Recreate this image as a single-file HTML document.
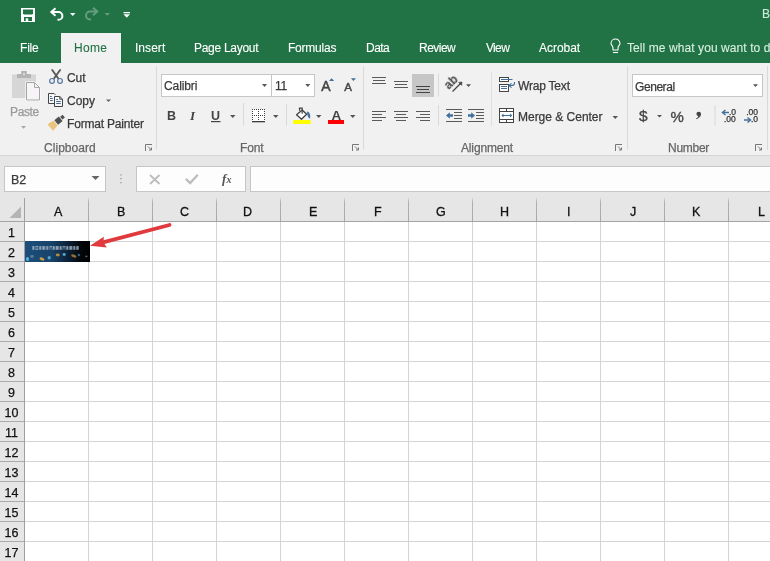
<!DOCTYPE html>
<html><head><meta charset="utf-8">
<style>
*{margin:0;padding:0;box-sizing:border-box}
html,body{width:770px;height:561px;overflow:hidden;background:#fff;font-family:"Liberation Sans",sans-serif;-webkit-font-smoothing:antialiased}
.tx,.rh,svg text{will-change:transform}
.a{position:absolute;white-space:nowrap}
.tx{line-height:14px;-webkit-text-stroke:0.25px currentColor}
#title{position:absolute;left:0;top:0;width:770px;height:63px;background:#217346}
#home{position:absolute;left:61px;top:33px;width:60px;height:31px;background:#f1f1f1}
#ribbon{position:absolute;left:0;top:63px;width:770px;height:92px;background:#f1f1f1}
#rline{position:absolute;left:0;top:155px;width:770px;height:1px;background:#d5d5d5}
#fbar{position:absolute;left:0;top:156px;width:770px;height:43px;background:#e6e6e6}
.sep{position:absolute;width:1px;background:#d9d9d9}
.box{position:absolute;background:#fff;border:1px solid #c6c6c6}
#hdr{position:absolute;left:0;top:199px;width:770px;height:22px;background:#e6e6e6}
#rhbg{position:absolute;left:0;top:221px;width:24px;height:340px;background:#e6e6e6}
.vl{position:absolute;width:1px;background:#d4d4d4}
.hl{position:absolute;height:1px;background:#d4d4d4}
.rh{position:absolute;left:0;width:23px;font-size:12.5px;color:#111;-webkit-text-stroke:0.25px currentColor;text-align:center;line-height:20px}
#ov{position:absolute;left:0;top:0;z-index:5}
</style></head><body>
<div id="title"></div>
<div id="home"></div>
<div id="ribbon"></div>
<div id="rline"></div>
<div id="fbar"></div>
<div class="sep" style="left:156px;top:66px;height:84px"></div>
<div class="sep" style="left:363px;top:66px;height:84px"></div>
<div class="sep" style="left:627px;top:66px;height:84px"></div>
<div class="sep" style="left:767px;top:66px;height:84px"></div>
<div class="box" style="left:161px;top:74px;width:111px;height:23px"></div>
<div class="box" style="left:271px;top:74px;width:44px;height:23px"></div>
<div class="box" style="left:632px;top:74px;width:131px;height:23px"></div>
<div class="box" style="left:4px;top:166px;width:102px;height:26px;background:#fdfdfd"></div>
<div class="box" style="left:136px;top:166px;width:110px;height:26px;background:#fdfdfd"></div>
<div class="box" style="left:250px;top:166px;width:530px;height:26px;background:#fdfdfd"></div>
<div id="hdr"></div>
<div id="rhbg"></div>
<div class="vl" style="left:24px;top:198px;height:363px;background:#a0a0a0"></div>
<div class="vl" style="left:88px;top:197px;height:24px;background:linear-gradient(#e6e6e6,#b0b0b0 5px,#a8a8a8)"></div>
<div class="vl" style="left:88px;top:222px;height:339px"></div>
<div class="vl" style="left:152px;top:197px;height:24px;background:linear-gradient(#e6e6e6,#b0b0b0 5px,#a8a8a8)"></div>
<div class="vl" style="left:152px;top:222px;height:339px"></div>
<div class="vl" style="left:216px;top:197px;height:24px;background:linear-gradient(#e6e6e6,#b0b0b0 5px,#a8a8a8)"></div>
<div class="vl" style="left:216px;top:222px;height:339px"></div>
<div class="vl" style="left:280px;top:197px;height:24px;background:linear-gradient(#e6e6e6,#b0b0b0 5px,#a8a8a8)"></div>
<div class="vl" style="left:280px;top:222px;height:339px"></div>
<div class="vl" style="left:344px;top:197px;height:24px;background:linear-gradient(#e6e6e6,#b0b0b0 5px,#a8a8a8)"></div>
<div class="vl" style="left:344px;top:222px;height:339px"></div>
<div class="vl" style="left:408px;top:197px;height:24px;background:linear-gradient(#e6e6e6,#b0b0b0 5px,#a8a8a8)"></div>
<div class="vl" style="left:408px;top:222px;height:339px"></div>
<div class="vl" style="left:472px;top:197px;height:24px;background:linear-gradient(#e6e6e6,#b0b0b0 5px,#a8a8a8)"></div>
<div class="vl" style="left:472px;top:222px;height:339px"></div>
<div class="vl" style="left:536px;top:197px;height:24px;background:linear-gradient(#e6e6e6,#b0b0b0 5px,#a8a8a8)"></div>
<div class="vl" style="left:536px;top:222px;height:339px"></div>
<div class="vl" style="left:600px;top:197px;height:24px;background:linear-gradient(#e6e6e6,#b0b0b0 5px,#a8a8a8)"></div>
<div class="vl" style="left:600px;top:222px;height:339px"></div>
<div class="vl" style="left:664px;top:197px;height:24px;background:linear-gradient(#e6e6e6,#b0b0b0 5px,#a8a8a8)"></div>
<div class="vl" style="left:664px;top:222px;height:339px"></div>
<div class="vl" style="left:728px;top:197px;height:24px;background:linear-gradient(#e6e6e6,#b0b0b0 5px,#a8a8a8)"></div>
<div class="vl" style="left:728px;top:222px;height:339px"></div>
<div class="vl" style="left:792px;top:197px;height:24px;background:linear-gradient(#e6e6e6,#b0b0b0 5px,#a8a8a8)"></div>
<div class="vl" style="left:792px;top:222px;height:339px"></div>
<div class="hl" style="left:0;top:221px;width:770px;background:#a4a4a4"></div>
<div class="hl" style="left:0;top:241px;width:24px;background:#acacac"></div>
<div class="hl" style="left:25px;top:241px;width:745px"></div>
<div class="hl" style="left:0;top:261px;width:24px;background:#acacac"></div>
<div class="hl" style="left:25px;top:261px;width:745px"></div>
<div class="hl" style="left:0;top:281px;width:24px;background:#acacac"></div>
<div class="hl" style="left:25px;top:281px;width:745px"></div>
<div class="hl" style="left:0;top:301px;width:24px;background:#acacac"></div>
<div class="hl" style="left:25px;top:301px;width:745px"></div>
<div class="hl" style="left:0;top:321px;width:24px;background:#acacac"></div>
<div class="hl" style="left:25px;top:321px;width:745px"></div>
<div class="hl" style="left:0;top:341px;width:24px;background:#acacac"></div>
<div class="hl" style="left:25px;top:341px;width:745px"></div>
<div class="hl" style="left:0;top:361px;width:24px;background:#acacac"></div>
<div class="hl" style="left:25px;top:361px;width:745px"></div>
<div class="hl" style="left:0;top:381px;width:24px;background:#acacac"></div>
<div class="hl" style="left:25px;top:381px;width:745px"></div>
<div class="hl" style="left:0;top:401px;width:24px;background:#acacac"></div>
<div class="hl" style="left:25px;top:401px;width:745px"></div>
<div class="hl" style="left:0;top:421px;width:24px;background:#acacac"></div>
<div class="hl" style="left:25px;top:421px;width:745px"></div>
<div class="hl" style="left:0;top:441px;width:24px;background:#acacac"></div>
<div class="hl" style="left:25px;top:441px;width:745px"></div>
<div class="hl" style="left:0;top:461px;width:24px;background:#acacac"></div>
<div class="hl" style="left:25px;top:461px;width:745px"></div>
<div class="hl" style="left:0;top:481px;width:24px;background:#acacac"></div>
<div class="hl" style="left:25px;top:481px;width:745px"></div>
<div class="hl" style="left:0;top:501px;width:24px;background:#acacac"></div>
<div class="hl" style="left:25px;top:501px;width:745px"></div>
<div class="hl" style="left:0;top:521px;width:24px;background:#acacac"></div>
<div class="hl" style="left:25px;top:521px;width:745px"></div>
<div class="hl" style="left:0;top:541px;width:24px;background:#acacac"></div>
<div class="hl" style="left:25px;top:541px;width:745px"></div>
<div class="hl" style="left:0;top:561px;width:24px;background:#acacac"></div>
<div class="hl" style="left:25px;top:561px;width:745px"></div>
<div class="rh" style="top:223px">1</div>
<div class="rh" style="top:243px">2</div>
<div class="rh" style="top:263px">3</div>
<div class="rh" style="top:283px">4</div>
<div class="rh" style="top:303px">5</div>
<div class="rh" style="top:323px">6</div>
<div class="rh" style="top:343px">7</div>
<div class="rh" style="top:363px">8</div>
<div class="rh" style="top:383px">9</div>
<div class="rh" style="top:403px">10</div>
<div class="rh" style="top:423px">11</div>
<div class="rh" style="top:443px">12</div>
<div class="rh" style="top:463px">13</div>
<div class="rh" style="top:483px">14</div>
<div class="rh" style="top:503px">15</div>
<div class="rh" style="top:523px">16</div>
<div class="rh" style="top:543px">17</div>
<div id="t_file" class="a tx" style="left:19.60px;top:41.00px;font-size:12px;color:#fff;letter-spacing:-0.200px;-webkit-text-stroke:0.1px currentColor">File</div>
<div id="t_home" class="a tx" style="left:74.00px;top:41.00px;font-size:12px;color:#217346;letter-spacing:0.333px;-webkit-text-stroke:0.1px currentColor">Home</div>
<div id="t_insert" class="a tx" style="left:134.80px;top:41.00px;font-size:12px;color:#fff;letter-spacing:0.040px;-webkit-text-stroke:0.1px currentColor">Insert</div>
<div id="t_page" class="a tx" style="left:194.00px;top:41.00px;font-size:12px;color:#fff;letter-spacing:-0.280px;-webkit-text-stroke:0.1px currentColor">Page Layout</div>
<div id="t_form" class="a tx" style="left:288.20px;top:41.00px;font-size:12px;color:#fff;letter-spacing:-0.229px;-webkit-text-stroke:0.1px currentColor">Formulas</div>
<div id="t_data" class="a tx" style="left:365.60px;top:41.00px;font-size:12px;color:#fff;letter-spacing:-0.534px;-webkit-text-stroke:0.1px currentColor">Data</div>
<div id="t_review" class="a tx" style="left:418.80px;top:41.00px;font-size:12px;color:#fff;letter-spacing:-0.520px;-webkit-text-stroke:0.1px currentColor">Review</div>
<div id="t_view" class="a tx" style="left:485.60px;top:41.00px;font-size:12px;color:#fff;letter-spacing:-0.667px;-webkit-text-stroke:0.1px currentColor">View</div>
<div id="t_acro" class="a tx" style="left:539.40px;top:41.00px;font-size:12px;color:#fff;letter-spacing:-0.034px;-webkit-text-stroke:0.1px currentColor">Acrobat</div>
<div id="t_tell" class="a tx" style="left:627.20px;top:41.00px;font-size:12px;color:#d8efdf;letter-spacing:0.080px;-webkit-text-stroke:0.1px currentColor">Tell me what you want to do</div>
<div id="t_b" class="a tx" style="left:761.50px;top:6.70px;font-size:12px;color:#cdebd6;-webkit-text-stroke:0.1px currentColor">B</div>
<div id="t_paste" class="a tx" style="left:9.50px;top:105.00px;font-size:12px;color:#9a9a9a;letter-spacing:-0.376px;">Paste</div>
<div id="t_cut" class="a tx" style="left:66.80px;top:71.40px;font-size:12px;color:#3a3a3a;letter-spacing:-0.100px;">Cut</div>
<div id="t_copy" class="a tx" style="left:67.00px;top:94.40px;font-size:12px;color:#3a3a3a;">Copy</div>
<div id="t_fp" class="a tx" style="left:67.20px;top:117.40px;font-size:12px;color:#3a3a3a;letter-spacing:-0.184px;">Format Painter</div>
<div id="t_clip" class="a tx" style="left:43.60px;top:141.00px;font-size:12px;color:#666;letter-spacing:0.050px;">Clipboard</div>
<div id="t_font" class="a tx" style="left:240.20px;top:140.80px;font-size:12px;color:#666;letter-spacing:-0.134px;">Font</div>
<div id="t_align" class="a tx" style="left:461.40px;top:141.00px;font-size:12px;color:#666;letter-spacing:-0.150px;">Alignment</div>
<div id="t_num" class="a tx" style="left:668.00px;top:141.00px;font-size:12px;color:#666;letter-spacing:-0.280px;">Number</div>
<div id="t_calibri" class="a tx" style="left:163.60px;top:78.80px;font-size:12px;color:#3a3a3a;letter-spacing:-0.100px;">Calibri</div>
<div id="t_11" class="a tx" style="left:275.00px;top:79.00px;font-size:12px;color:#3a3a3a;letter-spacing:-0.300px;">11</div>
<div id="t_wrap" class="a tx" style="left:518.00px;top:79.40px;font-size:12px;color:#3a3a3a;letter-spacing:-0.200px;">Wrap Text</div>
<div id="t_merge" class="a tx" style="left:518.00px;top:110.20px;font-size:12px;color:#3a3a3a;letter-spacing:-0.015px;">Merge &amp; Center</div>
<div id="t_general" class="a tx" style="left:635.40px;top:80.00px;font-size:12px;color:#3a3a3a;letter-spacing:-0.433px;">General</div>
<div id="t_b2" class="a tx" style="left:11.40px;top:173.00px;font-size:12.5px;color:#3a3a3a;">B2</div>
<div id="t_cA" class="a tx" style="left:53.80px;top:205.00px;font-size:12.5px;color:#111;-webkit-text-stroke:0.3px currentColor">A</div>
<div id="t_cB" class="a tx" style="left:117.10px;top:205.00px;font-size:12.5px;color:#111;-webkit-text-stroke:0.3px currentColor">B</div>
<div id="t_cC" class="a tx" style="left:180.00px;top:205.00px;font-size:12.5px;color:#111;-webkit-text-stroke:0.3px currentColor">C</div>
<div id="t_cD" class="a tx" style="left:243.20px;top:205.00px;font-size:12.5px;color:#111;-webkit-text-stroke:0.3px currentColor">D</div>
<div id="t_cE" class="a tx" style="left:309.10px;top:205.00px;font-size:12.5px;color:#111;-webkit-text-stroke:0.3px currentColor">E</div>
<div id="t_cF" class="a tx" style="left:373.60px;top:205.00px;font-size:12.5px;color:#111;-webkit-text-stroke:0.3px currentColor">F</div>
<div id="t_cG" class="a tx" style="left:435.80px;top:205.00px;font-size:12.5px;color:#111;-webkit-text-stroke:0.3px currentColor">G</div>
<div id="t_cH" class="a tx" style="left:500.40px;top:205.00px;font-size:12.5px;color:#111;-webkit-text-stroke:0.3px currentColor">H</div>
<div id="t_cI" class="a tx" style="left:566.50px;top:205.00px;font-size:12.5px;color:#111;-webkit-text-stroke:0.3px currentColor">I</div>
<div id="t_cJ" class="a tx" style="left:629.90px;top:205.00px;font-size:12.5px;color:#111;-webkit-text-stroke:0.3px currentColor">J</div>
<div id="t_cK" class="a tx" style="left:692.20px;top:205.00px;font-size:12.5px;color:#111;-webkit-text-stroke:0.3px currentColor">K</div>
<div id="t_cL" class="a tx" style="left:757.50px;top:205.00px;font-size:12.5px;color:#111;-webkit-text-stroke:0.3px currentColor">L</div>
<svg id="ov" width="770" height="561" viewBox="0 0 770 561">
<!-- QAT -->
<rect x="21" y="8" width="14" height="14" fill="#fff"/>
<path d="M23,9.5 H33 V13.5 L32,14.5 H24 L23,13.5 Z" fill="#217346"/>
<rect x="24" y="17" width="8" height="4" fill="#217346"/>
<rect x="25.7" y="18.3" width="2.5" height="2.7" fill="#fff"/>
<path d="M51,12 H58.5 A3.9,3.9 0 0 1 58.5,19.8 H57.5" fill="none" stroke="#fff" stroke-width="2"/>
<path d="M55.5,8.3 L51.3,12 L55.5,15.7" fill="none" stroke="#fff" stroke-width="2"/>
<path d="M70,13 H75.5 L72.75,16 Z" fill="#fff"/>
<g opacity="0.3">
<path d="M97.5,11.5 H90 A4,4 0 0 0 90,19.5 H91" fill="none" stroke="#fff" stroke-width="2"/>
<path d="M93,7.8 L97.2,11.5 L93,15.2" fill="none" stroke="#fff" stroke-width="2"/>
<path d="M104.5,13 H110 L107.25,15.8 Z" fill="#fff"/>
</g>
<rect x="123.5" y="12" width="6.5" height="1.3" fill="#fff"/>
<path d="M123.5,14.2 H130 L126.75,17.8 Z" fill="#fff"/>
<!-- lightbulb -->
<path d="M613,50 V48 C613,46 611,45 611,43.5 A4.5,4.5 0 0 1 620,43.5 C620,45 618,46 618,48 V50 Z" fill="none" stroke="#fff" stroke-width="1.1"/>
<path d="M613,52.5 H618" stroke="#fff" stroke-width="1.1"/>

<!-- Paste -->
<rect x="12" y="74.5" width="24" height="23.5" fill="#d6d6d6"/>
<rect x="17" y="74" width="14" height="4" fill="#b4b4b4"/>
<rect x="21.2" y="71" width="5.6" height="3.5" fill="#b4b4b4"/>
<circle cx="24" cy="74.2" r="1" fill="#e6e6e6"/>
<path d="M25.5,81.5 H35 L40.5,87 V101 H25.5 Z" fill="#fff" />
<path d="M26.5,82.5 H34.5 L39.5,87.5 V100 H26.5 Z" fill="#f6f4f6" stroke="#a6a6a6" stroke-width="1"/>
<path d="M34.5,82.5 V87.5 H39.5" fill="none" stroke="#a6a6a6" stroke-width="1"/>
<path d="M21,126 H26 L23.5,128.8 Z" fill="#a6a6a6"/>

<!-- Cut -->
<path d="M52.2,70 L58.3,78.6 M60.1,70 L54,78.6" stroke="#555" stroke-width="1.8" fill="none" stroke-linecap="round"/>
<circle cx="52" cy="80.9" r="2.4" fill="#e3eefa" stroke="#60789a" stroke-width="1.2"/>
<circle cx="60" cy="80.9" r="2.4" fill="#e3eefa" stroke="#60789a" stroke-width="1.2"/>

<!-- Copy -->
<path d="M48.5,93.5 H54 L55.5,95 M48.5,93.5 V103.5 H54" fill="none" stroke="#444" stroke-width="1"/>
<rect x="49.5" y="94.5" width="5" height="8.5" fill="#f3f8fc"/>
<path d="M50,96.5 H51.8 M50,98.5 H52.8 M50,100.5 H52.8" stroke="#4d6a88" stroke-width="1"/>
<path d="M54.5,96.5 H59.8 L62.5,99.2 V106.5 H54.5 Z" fill="#f3f8fc" stroke="#444" stroke-width="1"/>
<path d="M59.8,96.5 V99.2 H62.5" fill="none" stroke="#444" stroke-width="1"/>
<path d="M56.2,99.5 H58 M56.2,101.5 H60.8 M56.2,103.5 H60.8" stroke="#4d6a88" stroke-width="1"/>

<!-- Format painter -->
<g transform="translate(56 122.6) rotate(-40)">
<path d="M-7.5,-4.3 L-0.6,-3.2 V3.2 L-7.5,4.3 Z" fill="#ebc47c"/>
<rect x="0.3" y="-2.9" width="5.8" height="5.8" fill="#505050"/>
<rect x="6.9" y="-1.8" width="3.2" height="3.6" fill="#505050"/>
</g>
<!-- dropdown copy -->
<path d="M106,99.5 H111 L108.5,102 Z" fill="#666"/>
<!-- launchers -->
<g fill="none" stroke="#777" stroke-width="1">
<path d="M145.5,151 V144.5 H152"/>
<path d="M148,146.5 L151.5,150 M151.5,147.5 V150 H149"/>
<path d="M352.5,151 V144.5 H359"/>
<path d="M355,146.5 L358.5,150 M358.5,147.5 V150 H356"/>
<path d="M615.5,151 V144.5 H622"/>
<path d="M618,146.5 L621.5,150 M621.5,147.5 V150 H619"/>
<path d="M755.5,151 V144.5 H762"/>
<path d="M758,146.5 L761.5,150 M761.5,147.5 V150 H759"/>
</g>

<!-- Font dropdowns -->
<path d="M262,84 H267 L264.5,87 Z" fill="#555"/>
<path d="M305.3,84 H310.3 L307.8,87 Z" fill="#555"/>
<!-- grow/shrink -->
<text x="321.2" y="90.8" font-family="Liberation Sans" font-size="14" fill="#444" stroke="#444" stroke-width="0.5">A</text>
<path d="M329,81 L331.6,78.2 L334.2,81 Z" fill="#41719c"/>
<text x="344.2" y="90.8" font-family="Liberation Sans" font-size="11.5" fill="#444" stroke="#444" stroke-width="0.45">A</text>
<path d="M350.9,78.3 H356 L353.45,81 Z" fill="#41719c"/>
<!-- B I U -->
<text x="167" y="120.3" font-family="Liberation Sans" font-weight="bold" font-size="12.5" fill="#444">B</text>
<text x="190" y="120.3" font-family="Liberation Serif" font-style="italic" font-weight="bold" font-size="13" fill="#444">I</text>
<text x="211" y="119.5" font-family="Liberation Sans" font-weight="bold" font-size="12.5" fill="#444">U</text>
<rect x="211" y="121" width="9.5" height="1.2" fill="#444"/>
<path d="M230,115 H235.5 L232.75,118 Z" fill="#555"/>
<rect x="243" y="103" width="1" height="23" fill="#d9d9d9"/>
<!-- borders -->
<rect x="252" y="109" width="13" height="12" fill="#fff"/>
<g fill="#3c3c3c">
<rect x="252" y="109" width="1" height="1"/><rect x="254" y="109" width="1" height="1"/><rect x="256" y="109" width="1" height="1"/><rect x="258" y="109" width="1" height="1"/><rect x="260" y="109" width="1" height="1"/><rect x="262" y="109" width="1" height="1"/><rect x="264" y="109" width="1" height="1"/>
<rect x="252" y="115" width="1" height="1"/><rect x="254" y="115" width="1" height="1"/><rect x="256" y="115" width="1" height="1"/><rect x="258" y="115" width="1" height="1"/><rect x="260" y="115" width="1" height="1"/><rect x="262" y="115" width="1" height="1"/><rect x="264" y="115" width="1" height="1"/>
<rect x="252" y="111" width="1" height="1"/><rect x="252" y="113" width="1" height="1"/><rect x="252" y="117" width="1" height="1"/><rect x="252" y="119" width="1" height="1"/>
<rect x="258" y="111" width="1" height="1"/><rect x="258" y="113" width="1" height="1"/><rect x="258" y="117" width="1" height="1"/><rect x="258" y="119" width="1" height="1"/>
<rect x="264" y="111" width="1" height="1"/><rect x="264" y="113" width="1" height="1"/><rect x="264" y="117" width="1" height="1"/><rect x="264" y="119" width="1" height="1"/>
<rect x="252" y="121" width="13" height="1.3"/>
</g>
<path d="M273,115 H278.5 L275.75,118 Z" fill="#555"/>
<rect x="286" y="104" width="1" height="22" fill="#d9d9d9"/>
<!-- fill color -->
<path d="M302.2,110 L306.6,114.2 L301.5,119.2 L296.6,114.8 Z" fill="#fff" stroke="#444" stroke-width="1.4" stroke-linejoin="round"/>
<path d="M299.5,110.8 V108.2 H302.2 V113.8" fill="none" stroke="#444" stroke-width="1.2"/>
<path d="M306.8,111.6 C309.2,111.8 310.8,114 310,118.8 C309,118.5 307.8,117 307.5,115.5 Z" fill="#41719c"/>
<rect x="293.2" y="120" width="17.5" height="4" fill="#ffff00"/>
<path d="M316,115 H321.5 L318.75,118 Z" fill="#555"/>
<!-- font color -->
<text x="331.5" y="119.8" font-family="Liberation Sans" font-weight="bold" font-size="13.5" fill="#444">A</text>
<rect x="328" y="120" width="16" height="4" fill="#ff0000"/>
<path d="M350,115 H355.5 L352.75,118 Z" fill="#555"/>

<!-- Alignment -->
<g fill="#5a5a5a">
<rect x="372" y="77" width="14" height="1"/><rect x="373" y="80" width="12" height="1"/><rect x="372" y="83" width="14" height="1"/>
<rect x="394" y="81" width="14" height="1"/><rect x="395" y="84" width="12" height="1"/><rect x="394" y="87" width="14" height="1"/>
</g>
<rect x="412" y="74" width="22" height="23" fill="#c6c6c6"/>
<g fill="#444">
<rect x="416" y="86" width="14" height="1"/><rect x="417" y="89" width="12" height="1"/><rect x="416" y="92" width="14" height="1"/>
</g>
<rect x="438" y="73.5" width="1" height="23" fill="#d9d9d9"/>
<g fill="#5a5a5a">
<rect x="372" y="111" width="14" height="1"/><rect x="372" y="114" width="10" height="1"/><rect x="372" y="117" width="14" height="1"/><rect x="372" y="120" width="10" height="1"/>
<rect x="394" y="111" width="14" height="1"/><rect x="396" y="114" width="10" height="1"/><rect x="394" y="117" width="14" height="1"/><rect x="396" y="120" width="10" height="1"/>
<rect x="416" y="111" width="14" height="1"/><rect x="420" y="114" width="10" height="1"/><rect x="416" y="117" width="14" height="1"/><rect x="420" y="120" width="10" height="1"/>
</g>
<rect x="438" y="105" width="1" height="21" fill="#d9d9d9"/>
<!-- orientation -->
<text x="0" y="0" font-family="Liberation Sans" font-size="12" font-weight="bold" fill="#444" transform="translate(448.8,90) rotate(-45)">ab</text>
<path d="M452.5,91.5 L461,83" stroke="#444" stroke-width="1.3"/>
<path d="M458.6,82.4 L462,82 L461.6,85.4 Z" fill="#444" stroke="#444" stroke-width="0.6"/>
<path d="M466,84.2 H471 L468.5,87 Z" fill="#555"/>
<!-- indent -->
<g fill="#5a5a5a">
<rect x="446" y="109" width="16" height="1"/><rect x="454" y="112" width="8" height="1"/><rect x="454" y="115" width="8" height="1"/><rect x="454" y="118" width="8" height="1"/><rect x="446" y="121" width="16" height="1"/>
<rect x="468" y="109" width="16" height="1"/><rect x="476" y="112" width="8" height="1"/><rect x="476" y="115" width="8" height="1"/><rect x="476" y="118" width="8" height="1"/><rect x="468" y="121" width="16" height="1"/>
</g>
<path d="M446,115.5 L449.8,112.3 V114.3 H453 V116.7 H449.8 V118.7 Z" fill="#41719c"/>
<path d="M475,115.5 L471.2,112.3 V114.3 H468 V116.7 H471.2 V118.7 Z" fill="#41719c"/>
<rect x="491" y="72" width="1" height="54" fill="#dedede"/>
<!-- wrap text -->
<rect x="499.5" y="77.5" width="9" height="4" fill="#fff" stroke="#444" stroke-width="1"/>
<rect x="499.5" y="84.5" width="9" height="7" fill="#fff" stroke="#444" stroke-width="1"/>
<path d="M501,79.5 H512.5 M501,86.5 H507 M501,88.5 H507" stroke="#41719c" stroke-width="1"/>
<path d="M514.5,82 V83.5 C514.5,85 513,85.5 511,85.5 H509.5" fill="none" stroke="#41719c" stroke-width="1.1"/>
<path d="M511.5,83.3 L509,85.5 L511.5,87.7" fill="none" stroke="#41719c" stroke-width="1.1"/>
<!-- merge -->
<rect x="499.5" y="108.5" width="14" height="14" fill="#fff" stroke="#444" stroke-width="1"/>
<path d="M499.5,111.5 H513.5 M499.5,119.5 H513.5 M506.5,108.5 V111.5 M506.5,119.5 V122.5" stroke="#444" stroke-width="1"/>
<path d="M502,115.5 H511.5" stroke="#41719c" stroke-width="1.1"/>
<path d="M501.3,115.5 L503.5,113.5 V117.5 Z M512.3,115.5 L510,113.5 V117.5 Z" fill="#41719c"/>
<path d="M612.5,116 H618 L615.25,119 Z" fill="#555"/>

<!-- Number -->
<path d="M753,84.3 H758 L755.5,87 Z" fill="#555"/>
<text x="639" y="121" font-family="Liberation Sans" font-size="15.5" fill="#444" stroke="#444" stroke-width="0.3">$</text>
<path d="M657,115 H662 L659.5,117.5 Z" fill="#555"/>
<text x="670.6" y="122.3" font-family="Liberation Sans" font-size="15" fill="#444" stroke="#444" stroke-width="0.35">%</text>
<path d="M698.6,111.8 C700.4,111.8 701.2,113 701,114.5 C700.8,116.5 699,118.3 696.3,119.2 L696,118.4 C697.5,117.6 698.2,116.8 698.4,115.9 C697.2,115.8 696.5,115 696.5,113.9 C696.5,112.6 697.4,111.8 698.6,111.8 Z" fill="#444"/>
<rect x="714.5" y="105.5" width="1" height="20.5" fill="#d9d9d9"/>
<path d="M723,112.5 H729" stroke="#41719c" stroke-width="1.5"/><path d="M725.5,110 L722.5,112.5 L725.5,115" fill="none" stroke="#41719c" stroke-width="1.5"/>
<text x="729" y="115" font-family="Liberation Sans" font-size="8.5" fill="#333" stroke="#333" stroke-width="0.25">.0</text>
<text x="724" y="122" font-family="Liberation Sans" font-size="8.5" fill="#333" stroke="#333" stroke-width="0.25">.00</text>
<text x="746.2" y="115" font-family="Liberation Sans" font-size="8.5" fill="#333" stroke="#333" stroke-width="0.25">.00</text>
<path d="M744,120 H750" stroke="#41719c" stroke-width="1.5"/><path d="M747.5,117.5 L750.5,120 L747.5,122.5" fill="none" stroke="#41719c" stroke-width="1.5"/>
<text x="751" y="122" font-family="Liberation Sans" font-size="8.5" fill="#333" stroke="#333" stroke-width="0.25">.0</text>

<!-- formula bar -->
<path d="M91.5,176 H99.5 L95.5,180 Z" fill="#666"/>
<g fill="#999"><rect x="120.3" y="174.3" width="1.3" height="1.3"/><rect x="120.3" y="178" width="1.3" height="1.3"/><rect x="120.3" y="182" width="1.3" height="1.3"/></g>
<path d="M150,175 L159.5,184 M159.5,175 L150,184" stroke="#bdbdbd" stroke-width="1.8"/>
<path d="M185.8,178.8 L190.2,183 L197.8,174.8" fill="none" stroke="#bdbdbd" stroke-width="2.3"/>
<text x="222" y="182.5" font-family="Liberation Serif" font-style="italic" font-weight="bold" font-size="13" fill="#555">f</text>
<text x="226.5" y="183" font-family="Liberation Serif" font-style="italic" font-weight="bold" font-size="10" fill="#555">x</text>
<rect x="779" y="166" width="1" height="1" fill="none"/>

<!-- picture in A2 -->
<defs>
<linearGradient id="pg" x1="0" x2="1" y1="0" y2="0">
<stop offset="0" stop-color="#1d4f7c"/><stop offset="0.4" stop-color="#18436a"/><stop offset="0.62" stop-color="#0e2740"/><stop offset="0.85" stop-color="#03070c"/><stop offset="1" stop-color="#000"/>
</linearGradient>
<filter id="bl" x="-50%" y="-50%" width="200%" height="200%"><feGaussianBlur stdDeviation="0.6"/></filter>
</defs>
<rect x="25" y="241" width="65" height="21" fill="url(#pg)"/>
<g filter="url(#bl)">
<rect x="32" y="246.2" width="47" height="3.6" fill="#8fa6b8" opacity="0.35"/>
<g fill="#c8d6e2" opacity="0.55">
<rect x="32.5" y="246" width="1.6" height="3.8"/><rect x="35.5" y="246" width="2.5" height="1"/><rect x="35.5" y="248.8" width="2.5" height="1"/><rect x="39.5" y="246" width="1.4" height="3.8"/><rect x="42.5" y="246" width="2.2" height="3.8"/><rect x="46.5" y="246" width="1.4" height="3.8"/><rect x="49.5" y="246" width="2.4" height="1.2"/><rect x="53" y="246" width="1.6" height="3.8"/><rect x="56" y="246" width="2.5" height="3.8"/><rect x="60" y="246" width="1.4" height="3.8"/><rect x="63" y="246" width="2.2" height="1.2"/><rect x="66.5" y="246" width="1.5" height="3.8"/><rect x="69.5" y="246" width="2.4" height="3.8"/><rect x="73.5" y="246" width="1.4" height="3.8"/><rect x="76.5" y="246" width="2" height="3.8"/>
</g>
<ellipse cx="27.5" cy="259" rx="1.6" ry="1.9" fill="#5ec8f0" opacity="0.85"/>
<ellipse cx="32" cy="256.5" rx="1.8" ry="1.4" fill="#8c9aa0" opacity="0.6"/>
<ellipse cx="42" cy="259" rx="2.6" ry="1.5" fill="#e6ae40" opacity="0.85" transform="rotate(25 42 259)"/>
<ellipse cx="49.2" cy="257.7" rx="1.6" ry="1.8" fill="#5ec0e8" opacity="0.8"/>
<ellipse cx="57.8" cy="255" rx="2" ry="1.4" fill="#d9a040" opacity="0.8"/>
<ellipse cx="64.2" cy="254.5" rx="1.6" ry="1.4" fill="#62c8ee" opacity="0.8"/>
<ellipse cx="73.8" cy="256" rx="2.8" ry="1.4" fill="#c98a38" opacity="0.75" transform="rotate(20 73.8 256)"/>
<ellipse cx="78.9" cy="255" rx="1.3" ry="1.3" fill="#3f84b0" opacity="0.7"/>
<ellipse cx="86.4" cy="256.4" rx="1.1" ry="0.8" fill="#b0b0a0" opacity="0.6"/>
</g>
<path d="M9.5,218 H21 V206.5 Z" fill="#b4b4b4"/>
<!-- red arrow -->
<path d="M169.5,225 L101,242.8" stroke="#e03a3e" stroke-width="3.8" stroke-linecap="round"/>
<path d="M90,245.8 L103.8,236.8 L103.5,242.5 L106.8,247.6 Z" fill="#e03a3e"/>
</svg>

</body></html>
